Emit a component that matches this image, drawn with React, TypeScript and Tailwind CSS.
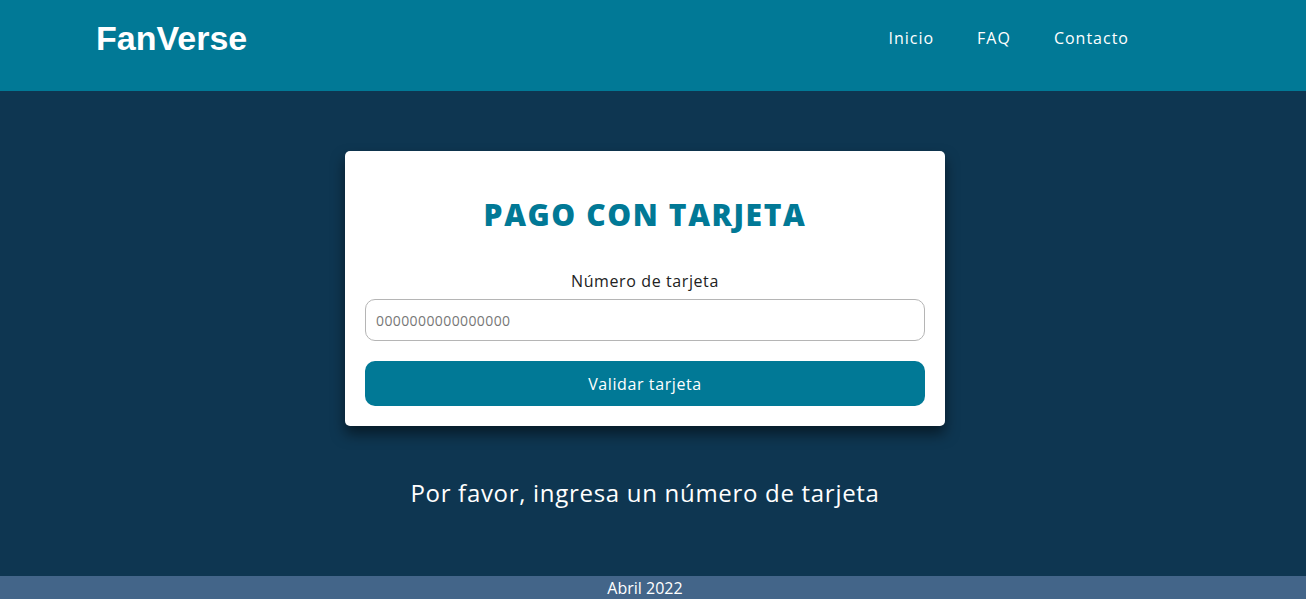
const body = { fontFamily: '"Open Sans", "Liberation Sans", sans-serif' };

export default function App() {
  return (
    <div className="flex h-[599px] w-full flex-col bg-[#0e3651] tracking-[0.6px]" style={body}>
      <header className="h-[91px] shrink-0 bg-[#017996]">
        <div className="flex h-full w-[1290px] items-center justify-between pb-[16px] pl-[96px] pr-[161px]">
          <span
            className="text-[34px] font-bold leading-none tracking-normal text-white"
            style={{ fontFamily: '"Liberation Sans", Arial, sans-serif' }}
          >
            FanVerse
          </span>
          <nav className="flex gap-[43px] text-[16px] tracking-[1px] text-white">
            <a href="#">Inicio</a>
            <a href="#">FAQ</a>
            <a href="#">Contacto</a>
          </nav>
        </div>
      </header>

      <main className="flex w-[1290px] flex-1 flex-col items-center pt-[60px]">
        <div className="w-[600px] rounded-[5px] bg-white px-[20px] pb-[20px] pt-[44px] shadow-[0_8px_14px_rgba(0,0,0,0.5)]">
          <h1 className="text-center text-[30px] font-extrabold leading-[40px] tracking-[1.6px] text-[#017996]">
            PAGO CON TARJETA
          </h1>
          <label className="mt-[34px] block text-center text-[16px] leading-[24px] text-[#222]">
            Número de tarjeta
          </label>
          <input
            className="mt-[6px] block h-[42px] w-full rounded-[10px] border border-[#b5b5b5] px-[10px] text-[14px] tracking-[0.4px] text-[#333] outline-none placeholder:text-[#777]"
            placeholder="0000000000000000"
          />
          <button className="mt-[20px] block h-[45px] w-full rounded-[10px] bg-[#017996] text-[16px] tracking-[0.6px] text-white">
            Validar tarjeta
          </button>
        </div>
        <p className="mt-[49px] text-[24px] leading-[36px] tracking-[0.7px] text-white">
          Por favor, ingresa un número de tarjeta
        </p>
      </main>

      <footer className="h-[23px] shrink-0 bg-[#436589]">
        <div className="flex h-full w-[1290px] items-center justify-center text-[16px] tracking-normal text-white">
          Abril 2022
        </div>
      </footer>
    </div>
  );
}
